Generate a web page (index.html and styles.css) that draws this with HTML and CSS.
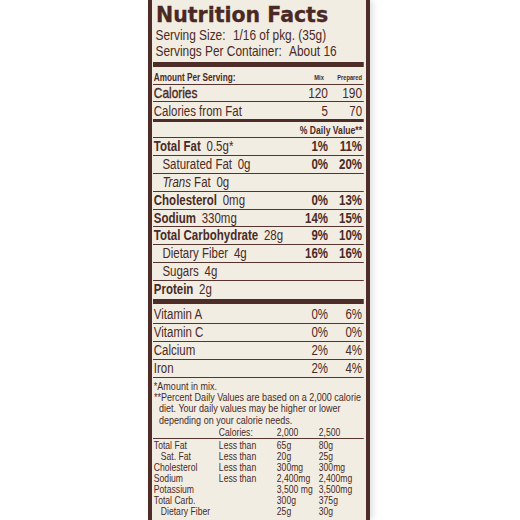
FILE: index.html
```html
<!DOCTYPE html>
<html lang="en">
<head>
<meta charset="utf-8">
<title>Nutrition Facts</title>
<link rel="stylesheet" href="styles.css">
</head>
<body>
<div class="label">
  <h1 class="title">Nutrition Facts</h1>
  <div class="body">
    <p class="serv">Serving Size:<span class="gap-s">1/16 of pkg. (35g)</span></p>
    <p class="serv">Servings Per Container:<span class="gap-s">About 16</span></p>
    <div class="bar bar-5"></div>

    <div class="row head"><span class="b">Amount Per Serving:</span><span class="num tiny mix">Mix</span><span class="num tiny">Prepared</span></div>
    <div class="row cal"><span class="med">Calories</span><span class="num">120</span><span class="num">190</span></div>
    <div class="row calfat"><span>Calories from Fat</span><span class="num">5</span><span class="num">70</span></div>
    <div class="bar bar-3"></div>
    <div class="row dv"><span class="b dvt">% Daily Value**</span></div>

    <div class="row n"><span><b>Total Fat</b><span class="gap">0.5g*</span></span><b class="num">1%</b><b class="num">11%</b></div>
    <div class="row n ind"><span>Saturated Fat<span class="gap">0g</span></span><b class="num">0%</b><b class="num">20%</b></div>
    <div class="row n ind"><span><i>Trans</i> Fat<span class="gap">0g</span></span><span></span><span></span></div>
    <div class="row n"><span><b>Cholesterol</b><span class="gap">0mg</span></span><b class="num">0%</b><b class="num">13%</b></div>
    <div class="row n"><span><b>Sodium</b><span class="gap">330mg</span></span><b class="num">14%</b><b class="num">15%</b></div>
    <div class="row n"><span><b>Total Carbohydrate</b><span class="gap">28g</span></span><b class="num">9%</b><b class="num">10%</b></div>
    <div class="row n ind"><span>Dietary Fiber<span class="gap">4g</span></span><b class="num">16%</b><b class="num">16%</b></div>
    <div class="row n ind"><span>Sugars<span class="gap">4g</span></span><span></span><span></span></div>
    <div class="row n last"><span><b>Protein</b><span class="gap">2g</span></span><span></span><span></span></div>
    <div class="bar bar-5b"></div>

    <div class="row v first"><span>Vitamin A</span><span class="num">0%</span><span class="num">6%</span></div>
    <div class="row v"><span>Vitamin C</span><span class="num">0%</span><span class="num">0%</span></div>
    <div class="row v"><span>Calcium</span><span class="num">2%</span><span class="num">4%</span></div>
    <div class="row v"><span>Iron</span><span class="num">2%</span><span class="num">4%</span></div>

    <p class="note first-note">*Amount in mix.</p>
    <p class="note hang">**Percent Daily Values are based on a 2,000 calorie<br>diet. Your daily values may be higher or lower<br>depending on your calorie needs.</p>

    <div class="dv-table">
      <div class="trow thead"><span></span><span>Calories:</span><span>2,000</span><span>2,500</span></div>
      <div class="trow"><span>Total Fat</span><span>Less than</span><span>65g</span><span>80g</span></div>
      <div class="trow"><span class="sub">Sat. Fat</span><span>Less than</span><span>20g</span><span>25g</span></div>
      <div class="trow"><span>Cholesterol</span><span>Less than</span><span>300mg</span><span>300mg</span></div>
      <div class="trow"><span>Sodium</span><span>Less than</span><span>2,400mg</span><span>2,400mg</span></div>
      <div class="trow"><span>Potassium</span><span></span><span>3,500 mg</span><span>3,500mg</span></div>
      <div class="trow"><span>Total Carb.</span><span></span><span>300g</span><span>375g</span></div>
      <div class="trow"><span class="sub">Dietary Fiber</span><span></span><span>25g</span><span>30g</span></div>
    </div>
  </div>
</div>
</body>
</html>
```

FILE: styles.css
```css
* {
  box-sizing: border-box;
  margin: 0;
  padding: 0;
}

html, body {
  height: 520px;
  overflow: hidden;
  background: #ffffff;
}

body {
  font-family: "Liberation Sans", Arial, sans-serif;
  color: #4a2a25;
}

.label {
  margin-left: 148px;
  width: 222px;
  height: 520px;
  overflow: hidden;
  background: #f1ede3;
  border-left: 4px solid #4e2c27;
  border-right: 4px solid #4e2c27;
  padding: 4px 2px 0 1px;
  box-shadow: 3px 0 6px rgba(0, 0, 0, 0.12);
}

.title {
  font-family: "DejaVu Sans", sans-serif;
  font-weight: bold;
  font-size: 20.5px;
  line-height: 23px;
  padding-left: 3px;
  color: #4a2823;
  -webkit-text-stroke: 0.3px #4a2823;
  white-space: nowrap;
}

/* condensed type: the body is laid out 1/0.82 wider and squeezed */
.body {
  width: 257.3px;
  transform: scaleX(0.82);
  transform-origin: 0 0;
}

.serv {
  font-size: 14.5px;
  line-height: 16px;
  padding-left: 3px;
  white-space: nowrap;
}

.gap-s {
  margin-left: 9px;
}

.gap {
  margin-left: 7px;
}

.bar {
  background: #4e2c27;
}

.bar-5 {
  height: 5px;
  margin-top: 3px;
}

.bar-3 {
  height: 3px;
}

.bar-5b {
  height: 5px;
}

.row {
  display: grid;
  grid-template-columns: 1fr 48.8px 41.5px;
  padding: 0 2.4px 0 1px;
  font-size: 14px;
  white-space: nowrap;
  border-bottom: 1px solid #563430;
}

.num {
  text-align: right;
}

.b, b {
  font-weight: bold;
}

.med {
  -webkit-text-stroke: 0.35px #4a2a25;
}

.head {
  height: 18px;
  padding-top: 5px;
  line-height: 12px;
  font-size: 10px;
}

.tiny {
  font-size: 7px;
  font-weight: bold;
}

.mix {
  padding-right: 5px;
}

.cal {
  height: 17px;
  line-height: 16px;
  font-size: 14.5px;
}

.calfat {
  height: 17px;
  padding-top: 1px;
  line-height: 16px;
  border-bottom: none;
}

.dv {
  height: 16px;
  padding-top: 2px;
  line-height: 13px;
  font-size: 10.5px;
}

.dvt {
  grid-column: 1 / -1;
  text-align: right;
}

.n {
  height: 17.875px;
  line-height: 16px;
}

.n.last {
  border-bottom: none;
}

.ind > span:first-child {
  padding-left: 10.5px;
}

.v {
  height: 18px;
  line-height: 17px;
}

.v.first {
  height: 20px;
  padding-top: 2px;
}

.note {
  font-size: 11px;
  line-height: 12px;
  padding-left: 1px;
  white-space: nowrap;
}

.first-note {
  padding-top: 2px;
}

.hang {
  line-height: 11.6px;
  padding-left: 7.3px;
  text-indent: -6.1px;
}

.dv-table {
  font-size: 10.5px;
  padding-top: 0.5px;
}

.trow {
  display: grid;
  grid-template-columns: 79.3px 70.7px 51.2px 1fr;
  height: 10.9px;
  line-height: 11px;
  padding-left: 1px;
  white-space: nowrap;
}

.thead {
  height: 12px;
  border-bottom: 1px solid #563430;
  margin-bottom: 1px;
}

.sub {
  padding-left: 8.5px;
}
```
